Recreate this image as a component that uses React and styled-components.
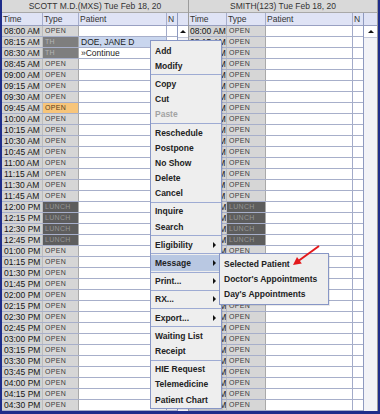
import styled, { createGlobalStyle } from 'styled-components';

const GlobalStyle = createGlobalStyle`
  html, body {
    margin: 0;
    padding: 0;
    background: #fff;
  }
  * {
    box-sizing: border-box;
  }
`

/* outer window frame, dark blue edge on left / right / bottom */
const Frame = styled.div`
  position: relative;
  width: 380px;
  height: 414px;
  border-style: solid;
  border-color: #1f2d8a;
  border-width: 0 2px 3px 2px;
  display: flex;
  background: #fff;
  font-family: "Liberation Sans", Arial, sans-serif;
  overflow: hidden;
`

const Panel = styled.div`
  width: ${p => p.$w}px;
  display: flex;
  flex-direction: column;
  border-right: 1px solid #9c9c9c;
`

const TitleBar = styled.div`
  height: 13px;
  background: #d9d9d9;
  border-bottom: 1px solid #a8a8a8;
  font-size: 8.5px;
  line-height: 12px;
  text-align: center;
  color: #333;
  white-space: nowrap;
  overflow: hidden;
`

const Body = styled.div`
  flex: 1;
  display: flex;
`

const Table = styled.div`
  flex: 1;
  display: flex;
  flex-direction: column;
`

const HeadRow = styled.div`
  display: grid;
  grid-template-columns: ${p => p.$cols};
  height: 13px;
  background: #dfe3f5;
  border-bottom: 1px solid #98a0c2;
`

const HeadCell = styled.div`
  font-size: 8.5px;
  line-height: 12px;
  padding-left: 1px;
  color: #333;
  border-right: 1px solid #a6aecc;
  white-space: nowrap;
  overflow: hidden;
`

const Row = styled.div`
  display: grid;
  grid-template-columns: ${p => p.$cols};
  height: 11px;
  border-bottom: 1px solid #a7afca;
`

const TimeCell = styled.div`
  background: #d3d3d3;
  border-right: 1px solid #bdbdbd;
  font-size: 8.5px;
  line-height: 10px;
  padding-left: ${p => p.$pad}px;
  color: #151515;
  white-space: nowrap;
  overflow: hidden;
`

const typeBg = { open: '#d6d6d6', soon: '#f7c57a', th: '#7e7e7e', lunch: '#5d5d5d' }
const typeFg = { open: '#3c3c3c', soon: '#5a4020', th: '#b4b4b4', lunch: '#959595' }

const TypeCell = styled.div`
  background: ${p => typeBg[p.$kind]};
  color: ${p => typeFg[p.$kind]};
  border-right: 1px solid #a9a9a9;
  font-size: 7px;
  letter-spacing: 0.3px;
  line-height: 10px;
  padding-left: 2px;
  white-space: nowrap;
  overflow: hidden;
`

const PatientCell = styled.div`
  background: ${p => (p.$selected ? '#c9d6ee' : '#fff')};
  border-right: 1px solid #a3abc9;
  font-size: 8.5px;
  line-height: 10px;
  padding-left: 2px;
  color: #1b1b1b;
  white-space: nowrap;
  overflow: hidden;
`

const NCell = styled.div`
  background: #fff;
`

const ScrollBar = styled.div`
  width: ${p => p.$w}px;
  display: flex;
  flex-direction: column;
  border-left: 1px solid #8e9ac0;
  background: #f2f3f7;
`

const ScrollHead = styled.div`
  height: 13px;
  background: #dfe3f5;
  border-bottom: 1px solid #98a0c2;
`

const UpButton = styled.div`
  height: 12px;
  background: #fff;
  border-bottom: 1px solid #c4c9da;
  display: flex;
  align-items: center;
  justify-content: center;

  &:after {
    content: "";
    border-left: 3px solid transparent;
    border-right: 3px solid transparent;
    border-bottom: 3px solid #111;
  }
`

/* popup menus over the grid */
const Menu = styled.div`
  position: absolute;
  left: ${p => p.$x}px;
  top: ${p => p.$y}px;
  width: ${p => p.$w}px;
  background: #eeeeee;
  border: 1px solid #8796c6;
  padding: 2px 0 ${p => p.$pb}px 0;
  display: flex;
  flex-direction: column;
  box-shadow: 1px 1px 0 rgba(0, 0, 0, 0.08);
`

const Item = styled.div`
  height: 15.2px;
  display: flex;
  align-items: center;
  justify-content: space-between;
  padding: 0 5px 0 4px;
  font-size: 8.5px;
  font-weight: bold;
  white-space: nowrap;
  color: ${p => (p.$disabled ? '#a3a3a3' : '#222')};
  background: ${p => (p.$active ? '#b9c8e2' : 'transparent')};
`

const SubArrow = styled.span`
  width: 0;
  height: 0;
  border-top: 3px solid transparent;
  border-bottom: 3px solid transparent;
  border-left: 3px solid #111;
`

const Sep = styled.div`
  height: 3px;
  display: flex;
  align-items: center;

  &:before {
    content: "";
    flex: 1;
    height: 1px;
    background: #9eabd3;
  }
`

const Pointer = styled.svg`
  position: absolute;
  left: 286px;
  top: 242px;
`

const LEFT_COLS = '41px 36px 88px 10px'
const RIGHT_COLS = '38px 39px 87px 10px'

const times = Array.from({ length: 35 }, (_, i) => {
  const mins = 8 * 60 + i * 15
  let h = Math.floor(mins / 60)
  const m = mins % 60
  const ap = h >= 12 ? 'PM' : 'AM'
  if (h > 12) h -= 12
  return `${String(h).padStart(2, '0')}:${String(m).padStart(2, '0')} ${ap}`
})

const kindFor = (i, side) => {
  if (i >= 16 && i <= 19) return 'lunch'
  if (side === 'left') {
    if (i === 1 || i === 2) return 'th'
    if (i === 7) return 'soon'
  }
  return 'open'
}

const typeText = { open: 'OPEN', soon: 'OPEN', th: 'TH', lunch: 'LUNCH' }

const patients = { 1: 'DOE, JANE D', 2: '»Continue' }

const menuItems = [
  ['Add'], ['Modify'], '-',
  ['Copy'], ['Cut'], ['Paste', 'disabled'], '-',
  ['Reschedule'], ['Postpone'], ['No Show'], ['Delete'], ['Cancel'], '-',
  ['Inquire'], ['Search'], '-',
  ['Eligibility', 'sub'], '-',
  ['Message', 'sub', 'active'], '-',
  ['Print...', 'sub'], '-',
  ['RX...', 'sub'], '-',
  ['Export...', 'sub'], '-',
  ['Waiting List'], ['Receipt'], '-',
  ['HIE Request'], ['Telemedicine'], ['Patient Chart'],
]

const Schedule = ({ title, cols, side, width, scrollW, timePad }) => (
  <Panel $w={width}>
    <TitleBar>{title}</TitleBar>
    <Body>
      <Table>
        <HeadRow $cols={cols}>
          <HeadCell>Time</HeadCell>
          <HeadCell>Type</HeadCell>
          <HeadCell>Patient</HeadCell>
          <HeadCell style={{ borderRight: 'none' }}>N</HeadCell>
        </HeadRow>
        {times.map((t, i) => {
          const kind = kindFor(i, side)
          return (
            <Row key={t} $cols={cols}>
              <TimeCell $pad={timePad}>{t}</TimeCell>
              <TypeCell $kind={kind}>{typeText[kind]}</TypeCell>
              <PatientCell $selected={side === 'left' && i === 1}>
                {side === 'left' ? patients[i] : ''}
              </PatientCell>
              <NCell />
            </Row>
          )
        })}
      </Table>
      <ScrollBar $w={scrollW}>
        <ScrollHead />
        <UpButton />
      </ScrollBar>
    </Body>
  </Panel>
)

const App = () => {
  return (
    <>
      <GlobalStyle />
      <Frame>
        <Schedule title="SCOTT M.D.(MXS) Tue Feb 18, 20" cols={LEFT_COLS} side="left" width={187} scrollW={11} timePad={2} />
        <Schedule title="SMITH(123) Tue Feb 18, 20" cols={RIGHT_COLS} side="right" width={189} scrollW={14} timePad={1} />

        <Menu $x={148} $y={40} $w={72} $pb={1}>
          {menuItems.map((it, i) =>
            it === '-' ? (
              <Sep key={'s' + i} />
            ) : (
              <Item key={it[0]} $disabled={it.includes('disabled')} $active={it.includes('active')}>
                {it[0]}
                {it.includes('sub') && <SubArrow />}
              </Item>
            )
          )}
        </Menu>

        <Menu $x={217} $y={253} $w={110} $pb={2}>
          <Item>Selected Patient</Item>
          <Item>Doctor's Appointments</Item>
          <Item>Day's Appointments</Item>
        </Menu>

        <Pointer width="36" height="28" viewBox="0 0 36 28">
          <line x1="31" y1="4" x2="11" y2="18.5" stroke="#e3191c" strokeWidth="2" />
          <polygon points="5,23 13.8,21.4 9,15" fill="#e3191c" />
        </Pointer>
      </Frame>
    </>
  )
}

export default App;
